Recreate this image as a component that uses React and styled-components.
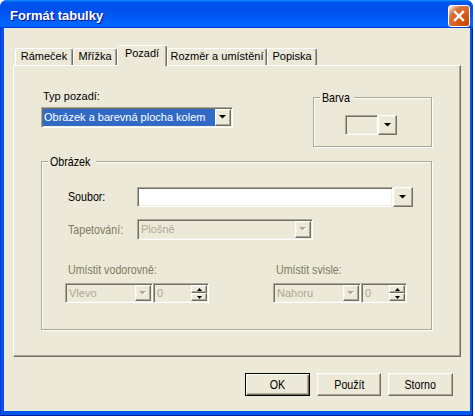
import React from "react";
import styled, { createGlobalStyle, css } from "styled-components";

const GlobalStyle = createGlobalStyle`
  html, body {
    margin: 0;
    padding: 0;
    background: #ffffff;
  }
  body {
    font-family: "Liberation Sans", Arial, sans-serif;
    font-size: 11px;
    color: #000;
  }
`;

// classic 3D edges
const sunken = css`
  box-sizing: border-box;
  border: 1px solid;
  border-color: #aca899 #ffffff #ffffff #aca899;
  box-shadow: inset 1px 1px #716f64, inset -1px -1px #f1efe2;
  padding: 1px;
`;

const raised = css`
  box-sizing: border-box;
  border: 1px solid;
  border-color: #ffffff #716f64 #716f64 #ffffff;
  box-shadow: inset -1px -1px #aca899, inset 1px 1px #f1efe2;
  background: #ece9d8;
`;

const Screen = styled.div`
  width: 475px;
  height: 416px;
  display: flex;
  background: #ffffff;
  overflow: hidden;
`;

const Window = styled.div`
  width: 473px;
  height: 416px;
  flex: none;
  display: flex;
  flex-direction: column;
  border-radius: 7px 7px 0 0;
  overflow: hidden;
  background: #0055ea;
`;

const TitleBar = styled.div`
  height: 28px;
  flex: none;
  box-sizing: border-box;
  padding: 3px 3px 0 10px;
  display: flex;
  align-items: center;
  justify-content: space-between;
  background: linear-gradient(
    180deg,
    #0997ff 0%,
    #0053ee 8%,
    #0050ee 40%,
    #0066ff 88%,
    #0066ff 93%,
    #005bff 95%,
    #003dd7 96%,
    #003dd7 100%
  );
`;

const Title = styled.span`
  color: #ffffff;
  font-family: "Liberation Sans", Arial, sans-serif;
  font-weight: bold;
  font-size: 13px;
  text-shadow: 1px 1px #0f1089;
`;

const CloseButton = styled.div`
  box-sizing: border-box;
  width: 22px;
  height: 22px;
  border: 1px solid #ffffff;
  border-radius: 3px;
  display: flex;
  align-items: center;
  justify-content: center;
  background: radial-gradient(
    circle at 90% 90%,
    #cc4600 0,
    #dc6527 55%,
    #cd7546 70%,
    #ffccb2 90%,
    #ffffff 100%
  );
`;

const Frame = styled.div`
  flex: 1;
  min-height: 0;
  display: flex;
  padding: 0 3px 5px 4px;
  background: #0055ea;
  box-shadow: inset 1px 0 #0831d9, inset -1px 0 #001da0, inset 0 -1px #001da0;
`;

const Body = styled.div`
  flex: 1;
  display: flex;
  flex-direction: column;
  background: #ece9d8;
  padding: 17px 9px 0 9px;
`;

const TabStrip = styled.div`
  display: flex;
  align-items: flex-end;
  height: 20px;
  flex: none;
  padding-left: 2px;
`;

const Tab = styled.div`
  box-sizing: border-box;
  width: ${(p) => p.$w}px;
  height: ${(p) => (p.$active ? 21 : 17)}px;
  margin-bottom: ${(p) => (p.$active ? -1 : 0)}px;
  position: relative;
  z-index: ${(p) => (p.$active ? 1 : 0)};
  border: 1px solid;
  border-bottom: none;
  border-color: #ffffff #716f64 transparent #ffffff;
  border-radius: 3px 3px 0 0;
  box-shadow: inset -1px 0 #aca899;
  background: #ece9d8;
  display: flex;
  justify-content: center;
  padding-top: 1px;
  line-height: 13px;
  white-space: nowrap;
`;

const Panel = styled.div`
  box-sizing: border-box;
  height: 292px;
  flex: none;
  border: 1px solid;
  border-color: #ffffff #716f64 #716f64 #ffffff;
  box-shadow: inset -1px -1px #aca899;
  display: flex;
  flex-direction: column;
  padding: 24px 28px 0 27px;
`;

const TopRow = styled.div`
  display: flex;
  justify-content: space-between;
  align-items: flex-start;
`;

const TypeColumn = styled.div`
  display: flex;
  flex-direction: column;
  gap: 4px;
`;

const PlainLabel = styled.div`
  margin-left: 2px;
  line-height: 13px;
`;

const GroupBox = styled.fieldset`
  box-sizing: border-box;
  margin: ${(p) => p.$mt || 0}px 0 0 0;
  padding: 0;
  min-width: 0;
  width: ${(p) => (p.$w ? `${p.$w}px` : "auto")};
  height: ${(p) => p.$h}px;
  border: 1px solid #aca899;
  box-shadow: 1px 1px 0 #ffffff, inset 1px 1px 0 #ffffff;
`;

const Legend = styled.legend`
  box-sizing: border-box;
  width: ${(p) => p.$w}px;
  height: 13px;
  margin-left: 6px;
  padding: 0 0 0 2px;
  line-height: 13px;
  background: #ece9d8;
  white-space: nowrap;
`;

const GroupBody = styled.div`
  display: flex;
  flex-direction: column;
  padding: ${(p) => p.$pad};
`;

const Narrow = styled.span`
  display: inline-block;
  font-size: 13px;
  white-space: nowrap;
  transform: scaleX(0.82);
  transform-origin: ${(p) => (p.$center ? "center" : "left")} center;
`;

const FieldRow = styled.div`
  display: flex;
  align-items: center;
  margin-top: ${(p) => p.$mt || 0}px;
`;

const FieldLabel = styled.div`
  box-sizing: border-box;
  width: 72px;
  flex: none;
  padding-left: 3px;
  line-height: 14px;
  color: ${(p) => (p.$disabled ? "#7f7a5e" : "#000000")};
`;

const TextField = styled.div`
  ${sunken};
  width: ${(p) => p.$w}px;
  height: 20px;
  background: ${(p) => (p.$disabled ? "#ece9d8" : "#ffffff")};
`;

const Combo = styled.div`
  ${sunken};
  display: flex;
  width: ${(p) => p.$w}px;
  height: ${(p) => p.$h || 21}px;
  flex: none;
  background: ${(p) => (p.$disabled ? "#ece9d8" : "#ffffff")};
`;

const ComboValue = styled.div`
  flex: 1;
  min-width: 0;
  display: flex;
  align-items: center;
  padding-left: ${(p) => (p.$selected ? 1 : 2)}px;
  color: ${(p) =>
    p.$selected ? "#ffffff" : p.$disabled ? "#aca899" : "#000000"};
  background: ${(p) => (p.$selected ? "#316ac5" : "transparent")};
  white-space: nowrap;
  overflow: hidden;
  line-height: 13px;
`;

const DropButton = styled.div`
  ${raised};
  width: ${(p) => p.$w || 16}px;
  height: ${(p) => (p.$h ? `${p.$h}px` : "auto")};
  flex: none;
  display: flex;
  align-items: center;
  justify-content: center;
`;

const PlaceRow = styled.div`
  display: flex;
  margin-top: 23px;
`;

const PlaceColumn = styled.div`
  width: ${(p) => (p.$w ? `${p.$w}px` : "auto")};
  flex: none;
  display: flex;
  flex-direction: column;
`;

const PlaceLabel = styled.div`
  margin-left: 3px;
  line-height: 14px;
  color: #7f7a5e;
`;

const PlaceControls = styled.div`
  display: flex;
  align-items: flex-start;
  margin-top: 6px;
`;

const SpinBox = styled.div`
  ${sunken};
  display: flex;
  width: ${(p) => p.$w}px;
  height: 20px;
  flex: none;
  background: #ece9d8;
`;

const SpinValue = styled.div`
  flex: 1;
  display: flex;
  align-items: center;
  padding-left: 2px;
  color: #aca899;
  line-height: 13px;
`;

const SpinButtons = styled.div`
  width: 16px;
  flex: none;
  display: flex;
  flex-direction: column;
`;

const SpinButton = styled.div`
  ${raised};
  flex: 1;
  display: flex;
  align-items: center;
  justify-content: center;
`;

const ColorPicker = styled.div`
  display: flex;
  align-items: flex-start;
`;

const ButtonRow = styled.div`
  display: flex;
  justify-content: flex-end;
  gap: 7px;
  margin-top: 16px;
  padding-right: 8px;
`;

const PushButton = styled.div`
  ${raised};
  width: ${(p) => p.$w}px;
  height: 23px;
  display: flex;
  align-items: center;
  justify-content: center;
  ${(p) =>
    p.$default &&
    css`
      border-color: #000000;
      box-shadow: inset 1px 1px #ffffff, inset -1px -1px #716f64,
        inset -2px -2px #aca899;
    `}
`;

function Arrow({ disabled }) {
  return (
    <svg width="8" height="5" viewBox="0 0 8 5">
      {disabled && <polygon points="1,1 8,1 4.5,4.5" fill="#ffffff" />}
      <polygon points="0,0 7,0 3.5,3.5" fill={disabled ? "#aca899" : "#000000"} />
    </svg>
  );
}

function SmallArrow({ up }) {
  return (
    <svg width="5" height="3" viewBox="0 0 5 3">
      <polygon points={up ? "2.5,0 5,3 0,3" : "0,0 5,0 2.5,3"} fill="#000000" />
    </svg>
  );
}

function Spin({ w }) {
  return (
    <SpinBox $w={w}>
      <SpinValue>0</SpinValue>
      <SpinButtons>
        <SpinButton>
          <SmallArrow up />
        </SpinButton>
        <SpinButton>
          <SmallArrow />
        </SpinButton>
      </SpinButtons>
    </SpinBox>
  );
}

const tabs = [
  { label: "Rámeček", w: 58 },
  { label: "Mřížka", w: 44 },
  { label: "Pozadí", w: 50, active: true },
  { label: "Rozměr a umístění", w: 100 },
  { label: "Popiska", w: 50 },
];

export default function App() {
  return (
    <Screen>
      <GlobalStyle />
      <Window>
        <TitleBar>
          <Title>Formát tabulky</Title>
          <CloseButton>
            <svg width="12" height="12" viewBox="0 0 12 12">
              <path
                d="M2 2 L10 10 M10 2 L2 10"
                stroke="#ffffff"
                strokeWidth="2.4"
                strokeLinecap="square"
              />
            </svg>
          </CloseButton>
        </TitleBar>
        <Frame>
          <Body>
            <TabStrip>
              {tabs.map((t) => (
                <Tab key={t.label} $w={t.w} $active={t.active}>
                  {t.label}
                </Tab>
              ))}
            </TabStrip>
            <Panel>
              <TopRow>
                <TypeColumn>
                  <PlainLabel>Typ pozadí:</PlainLabel>
                  <Combo $w={192}>
                    <ComboValue $selected>Obrázek a barevná plocha kolem</ComboValue>
                    <DropButton>
                      <Arrow />
                    </DropButton>
                  </Combo>
                </TypeColumn>
                <GroupBox $w={119} $h={56} $mt={1}>
                  <Legend $w={34}>
                    <Narrow>Barva</Narrow>
                  </Legend>
                  <GroupBody $pad="11px 0 0 31px">
                    <ColorPicker>
                      <TextField $w={33} $disabled />
                      <DropButton $w={19} $h={20}>
                        <Arrow />
                      </DropButton>
                    </ColorPicker>
                  </GroupBody>
                </GroupBox>
              </TopRow>

              <GroupBox $h={175} $mt={8}>
                <Legend $w={48}>
                  <Narrow>Obrázek</Narrow>
                </Legend>
                <GroupBody $pad="19px 0 0 23px">
                  <FieldRow>
                    <FieldLabel>
                      <Narrow>Soubor:</Narrow>
                    </FieldLabel>
                    <TextField $w={256} />
                    <DropButton $w={20} $h={20}>
                      <Arrow />
                    </DropButton>
                  </FieldRow>
                  <FieldRow $mt={12}>
                    <FieldLabel $disabled>
                      <Narrow>Tapetování:</Narrow>
                    </FieldLabel>
                    <Combo $w={176} $disabled>
                      <ComboValue $disabled>Plošně</ComboValue>
                      <DropButton>
                        <Arrow disabled />
                      </DropButton>
                    </Combo>
                  </FieldRow>
                  <PlaceRow>
                    <PlaceColumn $w={208}>
                      <PlaceLabel>
                        <Narrow>Umístit vodorovně:</Narrow>
                      </PlaceLabel>
                      <PlaceControls>
                        <Combo $w={88} $h={20} $disabled>
                          <ComboValue $disabled>Vlevo</ComboValue>
                          <DropButton>
                            <Arrow disabled />
                          </DropButton>
                        </Combo>
                        <Spin w={56} />
                      </PlaceControls>
                    </PlaceColumn>
                    <PlaceColumn>
                      <PlaceLabel>
                        <Narrow>Umístit svisle:</Narrow>
                      </PlaceLabel>
                      <PlaceControls>
                        <Combo $w={88} $h={20} $disabled>
                          <ComboValue $disabled>Nahoru</ComboValue>
                          <DropButton>
                            <Arrow disabled />
                          </DropButton>
                        </Combo>
                        <Spin w={46} />
                      </PlaceControls>
                    </PlaceColumn>
                  </PlaceRow>
                </GroupBody>
              </GroupBox>
            </Panel>
            <ButtonRow>
              <PushButton $w={65} $default>
                <Narrow $center>OK</Narrow>
              </PushButton>
              <PushButton $w={64}>
                <Narrow $center>Použít</Narrow>
              </PushButton>
              <PushButton $w={65}>
                <Narrow $center>Storno</Narrow>
              </PushButton>
            </ButtonRow>
          </Body>
        </Frame>
      </Window>
    </Screen>
  );
}
